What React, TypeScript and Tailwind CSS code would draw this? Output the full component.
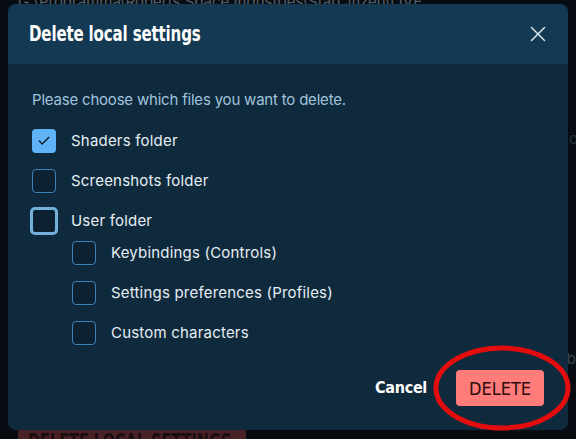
import { X, Check } from "lucide-react";

const title = { fontFamily: '"DejaVu Sans", "Liberation Sans", sans-serif' };
const body = { fontFamily: 'Inter, "Noto Sans", sans-serif' };

type Item = { label: string; checked?: boolean; focused?: boolean; nested?: boolean };

const ITEMS: Item[] = [
    { label: "Shaders folder", checked: true },
    { label: "Screenshots folder" },
    { label: "User folder", focused: true },
    { label: "Keybindings (Controls)", nested: true },
    { label: "Settings preferences (Profiles)", nested: true },
    { label: "Custom characters", nested: true },
];

function Box({ item }: { item: Item }) {
    if (item.checked) {
        return (
            <span className="w-6 h-6 rounded-[4px] bg-[#5fb3f6] flex items-center justify-center flex-shrink-0">
                <Check className="w-3.5 h-3.5 text-[#0c1f2e]" strokeWidth={2.5} />
            </span>
        );
    }
    if (item.focused) {
        return <span className="w-7 h-7 -mx-0.5 rounded-[5px] bg-[#0c2131] border-[3px] border-[#74b2de] flex-shrink-0" />;
    }
    return <span className="w-6 h-6 rounded-[4px] bg-[#0c2131] border border-[#3c82b6] flex-shrink-0" />;
}

export default function App() {
    return (
        <div className="relative w-[576px] h-[439px] overflow-hidden bg-[#060c11]" style={body}>
            {/* page behind the dialog */}
            <p className="text-[15px] leading-none text-[#56606a] pl-[18px] -mt-[6px] whitespace-nowrap">G:\Programma\Roberts Space Industries\StarCitizen\LIVE</p>
            <span className="absolute right-0 top-[348px] text-[15px] text-[#3a4550]">b</span>
            <span className="absolute right-[-2px] top-[128px] text-[15px] text-[#2a333c]">o</span>
            <div className="absolute left-[18px] top-[427px] w-[228px] h-[20px] bg-[#4a2226] px-[10px] overflow-hidden">
                <span className="block origin-left scale-x-[0.7] text-[#1c0d0e] text-[23px] font-bold font-stretch-condensed leading-[30px] whitespace-nowrap" style={title}>
                    DELETE LOCAL SETTINGS
                </span>
            </div>

            {/* dialog */}
            <div className="absolute left-[8px] top-[4px] w-[560px] h-[426px] rounded-[8px] overflow-hidden bg-[#0f2a3d] flex flex-col">
                <div className="h-[60px] bg-[#143a53] flex items-center justify-between pl-[21px] pr-[17px] flex-shrink-0">
                    <h1 className="origin-left scale-x-[0.76] text-[22px] font-bold font-stretch-condensed text-white tracking-[-0.2px] whitespace-nowrap -mt-px" style={title}>Delete local settings</h1>
                    <X className="w-[26px] h-[26px] text-[#dfe9f0]" strokeWidth={1.3} />
                </div>
                <div className="flex-1 flex flex-col px-[24px] pt-[26px]">
                    <p className="text-[15px] text-[#9fc3dc] leading-5 tracking-[-0.2px]">Please choose which files you want to delete.</p>
                    <div className="flex flex-col mt-[19px]">
                        {ITEMS.map((item, i) => (
                            <div
                                key={item.label}
                                className={`flex items-center gap-[15px] h-[24px] ${item.nested ? "pl-[40px]" : ""} ${i === 0 ? "" : i === 3 ? "mt-[8px]" : "mt-[16px]"}`}
                            >
                                <Box item={item} />
                                <span className="text-[15px] text-[#e6eef4] tracking-[0.2px]">{item.label}</span>
                            </div>
                        ))}
                    </div>
                    <div className="mt-auto mb-[24px] flex items-center justify-end gap-[29px]">
                        <button className="text-[16px] font-bold font-stretch-condensed text-white tracking-[-0.3px]" style={title}>Cancel</button>
                        <button className="w-[88px] h-[36px] rounded-[4px] bg-[#ff7c7a] text-[#2a0b0d] text-[18px] font-stretch-condensed" style={title}>DELETE</button>
                    </div>
                </div>
            </div>

            {/* red annotation ring */}
            <svg className="absolute left-[432px] top-[344px]" width="144" height="92" viewBox="0 0 144 92">
                <ellipse cx="70" cy="44" rx="66" ry="40" fill="none" stroke="#e40d0d" strokeWidth="5" />
            </svg>
        </div>
    );
}
